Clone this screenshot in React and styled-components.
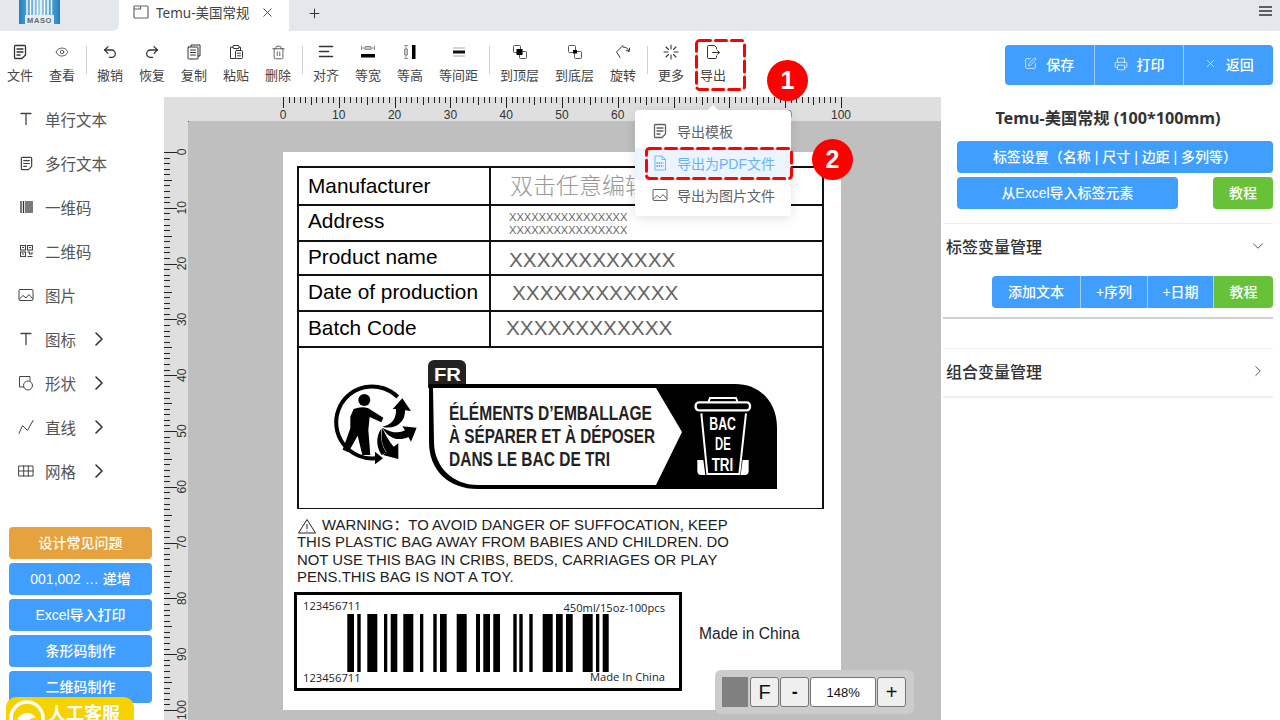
import React from "react";
import styled, { createGlobalStyle } from "styled-components";
import {
  ChevronDown,
  ChevronRight,
  Eye,
  Plus,
  Printer,
  Redo2,
  SquarePen,
  Trash2,
  Undo2,
  X,
} from "lucide-react";

const GlobalStyle = createGlobalStyle`
  html, body {
    margin: 0;
    padding: 0;
    background: #fff;
  }
  * {
    box-sizing: border-box;
  }
`;

const UI_FONT = `"Noto Sans", "Noto Sans CJK SC", sans-serif`;
const ARIAL_FONT = `"Liberation Sans", "Noto Sans CJK SC", sans-serif`;

const Page = styled.div`
  position: relative;
  width: 1280px;
  height: 720px;
  overflow: hidden;
  display: flex;
  flex-direction: column;
  font-family: ${UI_FONT};
  color: #444;
`;

/* tab strip */
const TabBar = styled.div`
  height: 31px;
  display: flex;
  flex-shrink: 0;
`;
const LogoCell = styled.div`
  width: 119px;
  background: #e4e7eb;
  border-bottom-right-radius: 7px;
  padding-left: 19px;
`;
const Tab = styled.div`
  width: 170px;
  display: flex;
  align-items: center;
  padding: 0 14px 7px;
  font-size: 13.5px;
  color: #444;
  svg:first-child {
    margin-right: 7px;
  }
`;
const TabTitle = styled.span`
  flex: 1;
`;
const TabRest = styled.div`
  flex: 1;
  background: #e4e7eb;
  display: flex;
  align-items: flex-start;
  justify-content: space-between;
  padding: 5px 7px 0 18px;
  color: #333;
`;
const PlusIcon = styled(Plus)`
  margin-top: 1px;
`;

/* toolbar */
const TopBar = styled.div`
  height: 66px;
  flex-shrink: 0;
  display: flex;
  align-items: flex-start;
  justify-content: space-between;
  padding-right: 7px;
`;
const Tools = styled.div`
  display: flex;
  align-items: flex-start;
  margin-left: -1px;
  padding-top: 12px;
`;
const Tool = styled.div`
  width: ${(p) => (p.$wide ? 55 : 42)}px;
  display: flex;
  flex-direction: column;
  align-items: center;
  font-size: 13px;
  line-height: 18px;
  color: #444;
`;
const ToolIcon = styled.div`
  height: 18px;
  margin-bottom: 5px;
  display: flex;
  align-items: center;
  justify-content: center;
  color: #333;
`;
const ToolDivider = styled.div`
  width: 1px;
  height: 28px;
  margin: 3px 2.5px 0;
  background: #d0d0d0;
`;
const ActionGroup = styled.div`
  margin-top: 14px;
  width: 268px;
  height: 40px;
  display: flex;
  border-radius: 4px;
  overflow: hidden;
  background: #409eff;
`;
const ActionButton = styled.div`
  flex: 1;
  display: flex;
  align-items: center;
  justify-content: center;
  gap: 9px;
  padding-bottom: 3px;
  color: #fff;
  font-size: 14px;
  font-weight: 500;
  & + & {
    border-left: 1px solid rgba(255, 255, 255, 0.5);
  }
`;

/* page body */
const Body = styled.div`
  flex: 1;
  min-height: 0;
  display: flex;
`;
const Sidebar = styled.div`
  width: 164px;
  flex-shrink: 0;
  display: flex;
  flex-direction: column;
  padding: 0 12px 17px 9px;
`;
const SideItem = styled.div`
  height: 44px;
  display: flex;
  align-items: center;
  padding-left: 9px;
  font-size: 15.5px;
  color: #555;
`;
const SideIcon = styled.div`
  width: 16px;
  margin-right: 11px;
  display: flex;
  justify-content: center;
  color: #444;
`;
const SideArrow = styled(ChevronRight)`
  margin-left: 11px;
  color: #333;
`;
const SideButtons = styled.div`
  margin-top: auto;
  display: flex;
  flex-direction: column;
  gap: 4px;
`;
const Button = styled.div`
  height: 32px;
  flex: ${(p) => (p.$grow ? 1 : "none")};
  width: ${(p) => (p.$width ? `${p.$width}px` : "auto")};
  display: flex;
  align-items: center;
  justify-content: center;
  padding-bottom: 2px;
  border-radius: 4px;
  background: ${(p) => p.$bg || "#409eff"};
  color: #fff;
  font-family: ${ARIAL_FONT};
  font-size: 14px;
  font-weight: 500;
`;
const ServiceBadge = styled.div`
  position: absolute;
  left: 6px;
  bottom: 0;
  width: 128px;
  height: 23px;
  overflow: hidden;
  background: #f5d200;
  border-radius: 10px 10px 0 0;
  display: flex;
  align-items: flex-start;
  padding-left: 2px;
  color: #fff;
  font-size: 18px;
  font-weight: 700;
  line-height: 32px;
  svg {
    margin-right: 2px;
    flex-shrink: 0;
  }
`;

/* workspace */
const Workspace = styled.div`
  position: relative;
  width: 777px;
  flex-shrink: 0;
  display: grid;
  grid-template-columns: 24px 1fr;
  grid-template-rows: 24px 1fr;
  background: #dfdfdf;
`;
const RulerCorner = styled.div`
  grid-column: 1;
  grid-row: 1;
`;
const RulerSvg = styled.svg`
  display: block;
  grid-column: ${(p) => p.$col};
  grid-row: ${(p) => p.$row};
  font-family: ${ARIAL_FONT};
  font-size: 12px;
  fill: #333;
`;
const Canvas = styled.div`
  position: relative;
  background: #bfbfbf;
  padding: 31px 0 0 95px;
  overflow: hidden;
`;
const CornerDot = styled.div`
  position: absolute;
  left: 0;
  top: 0;
  width: 1px;
  height: 1px;
  background: #e00;
`;
const Paper = styled.div`
  position: relative;
  width: 558px;
  height: 558px;
  background: #fff;
  color: #000;
  font-family: ${ARIAL_FONT};
`;
const LabelTable = styled.div`
  position: absolute;
  left: 14px;
  top: 14px;
  width: 527px;
  height: 343px;
  border: 2px solid #111;
  border-bottom-width: 1.5px;
  display: flex;
  flex-direction: column;
`;
const LabelRow = styled.div`
  height: ${(p) => p.$h}px;
  flex-shrink: 0;
  display: flex;
  border-bottom: 2px solid #111;
`;
const LabelName = styled.div`
  width: 192px;
  border-right: 2px solid #111;
  padding: 0 0 ${(p) => p.$lift || 0}px 9px;
  font-size: 20.8px;
  line-height: 1;
  display: flex;
  align-items: center;
`;
const LabelValue = styled.div`
  flex: 1;
  display: flex;
  flex-direction: column;
  justify-content: center;
  padding: ${(p) => p.$top || 0}px 0 ${(p) => p.$lift || 0}px ${(p) => p.$left}px;
  font-size: ${(p) => p.$size || 20.8}px;
  line-height: ${(p) => p.$line || 24}px;
  color: ${(p) => p.$color || "#666"};
  font-weight: ${(p) => p.$weight || 400};
  font-family: ${(p) => (p.$cjk ? `"Noto Sans CJK SC", sans-serif` : ARIAL_FONT)};
`;
const BadgeRow = styled.div`
  flex: 1;
  min-height: 0;
`;
const BadgeSvg = styled.svg`
  display: block;
  font-family: ${ARIAL_FONT};
  font-weight: 700;
`;
const Warning = styled.div`
  position: absolute;
  left: 14px;
  top: 365px;
  width: 450px;
  font-size: 14.9px;
  line-height: 17.4px;
  color: #222;
  white-space: nowrap;
`;
const WarningLine = styled.div`
  display: flex;
  align-items: center;
  gap: 5px;
`;
const BarcodeBox = styled.div`
  position: absolute;
  left: 11px;
  top: 440px;
  width: 388px;
  height: 99px;
  border: 3px solid #000;
  font-family: "Open Sans", ${ARIAL_FONT};
  font-size: 11.2px;
  line-height: 13px;
  color: #222;
`;
const BarcodeSvg = styled.svg`
  position: absolute;
  left: 50px;
  top: 19px;
`;
const BarcodeText = styled.span`
  position: absolute;
  ${(p) => (p.$right ? "right: 14px;" : "left: 6px;")}
  ${(p) => `top: ${p.$top}px;`}
`;
const MadeIn = styled.div`
  position: absolute;
  left: 416px;
  top: 473px;
  font-size: 15.6px;
  line-height: 18px;
  color: #222;
`;
const ZoomBar = styled.div`
  position: absolute;
  right: 27px;
  bottom: 6px;
  width: 199px;
  height: 44px;
  padding: 7px 8px 7px 7px;
  display: flex;
  gap: 1px;
  background: #ccc;
  border-radius: 6px;
`;
const ZoomSwatch = styled.div`
  width: 26px;
  background: #808080;
  margin-right: 1px;
`;
const ZoomButton = styled.div`
  width: ${(p) => p.$w}px;
  display: flex;
  align-items: center;
  justify-content: center;
  background: ${(p) => (p.$white ? "#fff" : "#efefef")};
  border: 1px solid #767676;
  border-radius: 3px;
  font-family: ${ARIAL_FONT};
  font-size: ${(p) => p.$size || 13}px;
  font-weight: ${(p) => (p.$bold ? 700 : 400)};
  color: #111;
`;

/* right panel */
const RightPanel = styled.div`
  flex: 1;
  padding: 0 7px 0 2px;
  display: flex;
  flex-direction: column;
`;
const PanelTitle = styled.div`
  height: 42px;
  margin-bottom: 2px;
  padding-bottom: 2px;
  display: flex;
  align-items: center;
  justify-content: center;
  font-size: 16.2px;
  font-weight: 700;
  color: #333;
`;
const PanelRow = styled.div`
  display: flex;
  justify-content: space-between;
  padding-left: 14px;
  margin-bottom: 4px;
`;
const SectionHead = styled.div`
  height: ${(p) => (p.$last ? 50 : 48)}px;
  margin-top: ${(p) => p.$top || 0}px;
  display: flex;
  align-items: center;
  justify-content: space-between;
  padding: 0 6px ${(p) => (p.$last ? 3 : 4)}px 3px;
  border-top: 1px solid #ebeef5;
  border-bottom: ${(p) => (p.$last ? "2px solid #ebeef5" : "none")};
  font-size: 16px;
  font-weight: 500;
  color: #303133;
`;
const ButtonGroup = styled.div`
  margin: 5px 0 0 auto;
  width: 281px;
  height: 32px;
  display: flex;
  border-radius: 4px;
  overflow: hidden;
`;
const GroupButton = styled.div`
  width: ${(p) => p.$w}px;
  display: flex;
  align-items: center;
  justify-content: center;
  padding-bottom: 2px;
  background: ${(p) => p.$bg || "#409eff"};
  color: #fff;
  font-family: ${ARIAL_FONT};
  font-size: 14px;
  font-weight: 500;
  & + & {
    border-left: 1px solid rgba(255, 255, 255, 0.5);
  }
`;
const GreyLine = styled.div`
  height: 2px;
  margin-top: 9px;
  background: #d0d0d0;
`;

/* overlays */
const Popover = styled.div`
  position: absolute;
  left: 635px;
  top: 110px;
  width: 156px;
  height: 106px;
  padding: 6px 0 4px;
  background: #fff;
  border-radius: 4px;
  box-shadow: 0 2px 12px rgba(0, 0, 0, 0.12);
  &::before {
    content: "";
    position: absolute;
    left: 73px;
    top: -5px;
    border-left: 5px solid transparent;
    border-right: 5px solid transparent;
    border-bottom: 5px solid #fff;
  }
`;
const PopItem = styled.div`
  height: 32px;
  display: flex;
  align-items: center;
  gap: 9px;
  padding: 0 0 2px 17px;
  font-family: ${ARIAL_FONT};
  font-size: 14px;
  color: ${(p) => (p.$active ? "#66b1ff" : "#606266")};
  background: ${(p) => (p.$active ? "#ecf5ff" : "transparent")};
`;
const DashFrame = styled.svg`
  position: absolute;
  left: ${(p) => p.$x}px;
  top: ${(p) => p.$y}px;
`;
const StepCircle = styled.div`
  position: absolute;
  left: ${(p) => p.$x}px;
  top: ${(p) => p.$y}px;
  width: 41px;
  height: 41px;
  border-radius: 50%;
  background: #f00;
  color: #fff;
  display: flex;
  align-items: center;
  justify-content: center;
  font-family: ${ARIAL_FONT};
  font-size: 25px;
  font-weight: 700;
`;

const DashBox = ({ x, y, w, h }) => (
  <DashFrame $x={x} $y={y} width={w} height={h}>
    <rect
      x="1.5"
      y="1.5"
      width={w - 3}
      height={h - 3}
      rx="3"
      fill="none"
      stroke="#f00"
      strokeWidth="3"
      strokeDasharray="11 5"
      strokeLinecap="round"
    />
  </DashFrame>
);

const Ic = ({ size = 16, children, sw = 1.2 }) => (
  <svg
    width={size}
    height={size}
    viewBox="0 0 16 16"
    fill="none"
    stroke="currentColor"
    strokeWidth={sw}
    strokeLinecap="round"
    strokeLinejoin="round"
  >
    {children}
  </svg>
);

const DocIcon = ({ size }) => (
  <Ic size={size} sw={1.3}>
    <path d="M10 14.5H3.5a1 1 0 0 1-1-1v-11a1 1 0 0 1 1-1h9a1 1 0 0 1 1 1V11l-3.5 3.5Z" />
    <path d="M5 5h6M5 8h6M5 11h3" />
  </Ic>
);
const CopyIcon = () => (
  <Ic sw={1}>
    <path d="M5 2.5V1h9v11h-2" />
    <rect x="2" y="3" width="10" height="12" rx="0.6" />
    <path d="M4.5 6h5M4.5 8.5h5M4.5 11h5" />
  </Ic>
);
const PasteIcon = () => (
  <Ic sw={1}>
    <path d="M11 3.2h1.5v3M5 3.2H2.5v11.3h5" />
    <rect x="5" y="1.5" width="6" height="3" rx="0.8" />
    <rect x="7.5" y="6.5" width="7" height="8" rx="1" />
    <path d="M9.5 9.2h3M9.5 11.8h3" />
  </Ic>
);
const AlignIcon = () => (
  <Ic sw={1.5}>
    <path d="M1.5 2.5h13M1.5 7.5h9M1.5 12.5h13" />
  </Ic>
);
const SameWidthIcon = () => (
  <svg width="16" height="16" viewBox="0 0 16 16">
    <path d="M1.5 2v4M14.5 2v4M1.5 4h13M5 2.5h6v3H5z" fill="none" stroke="#777" strokeWidth="0.8" />
    <rect x="1" y="10" width="14" height="3.5" fill="#000" />
  </svg>
);
const SameHeightIcon = () => (
  <svg width="16" height="16" viewBox="0 0 16 16">
    <path d="M2 1.5h4M2 14.5h4M4 1.5v13M2.5 5h3v6h-3z" fill="none" stroke="#777" strokeWidth="0.8" />
    <rect x="10" y="1" width="3.5" height="14" fill="#000" />
  </svg>
);
const SpacingIcon = () => (
  <svg width="14" height="16" viewBox="0 0 14 16">
    <path d="M1 4h12M1 12h12" stroke="#aaa" strokeWidth="1" />
    <rect x="1" y="6.5" width="12" height="3" fill="#111" />
  </svg>
);
const LayerIcon = ({ top }) => (
  <svg width="14" height="14" viewBox="0 0 14 14" fill="none" stroke="#444" strokeWidth="0.9">
    <rect x="0.5" y="0.5" width="7" height="7" rx="1" />
    <rect x="6.5" y="6.5" width="7" height="7" rx="1" />
    {top ? (
      <rect x="3.5" y="4" width="6" height="6" fill="#000" stroke="none" />
    ) : (
      <rect x="5" y="5" width="4" height="3.5" fill="#000" stroke="none" />
    )}
  </svg>
);
const RotateIcon = () => (
  <Ic sw={1}>
    <path d="M8 1.5 1.5 8l3.5 5.5" />
    <path d="M8 3c3 0 5.2 1.6 6 4" />
    <path d="M14.5 4.2 14.2 7.4 11.4 6.6" />
  </Ic>
);
const BurstIcon = () => (
  <Ic sw={1.1}>
    <path d="M8 1v4M8 11v4M1 8h4M11 8h4M3 3l2.5 2.5M13 3l-2.5 2.5M3 13l2.5-2.5M13 13l-2.5-2.5" />
  </Ic>
);
const ExportIcon = () => (
  <Ic sw={1}>
    <path d="M11.5 5V3.5L9.5 1.5h-6a1 1 0 0 0-1 1v11a1 1 0 0 0 1 1h7a1 1 0 0 0 1-1V12" />
    <path d="M7.5 8.5h7M12.5 6.5l2 2-2 2" />
  </Ic>
);
const TeeIcon = () => (
  <Ic sw={1.3}>
    <path d="M3 2.5h10M8 2.5v11" />
  </Ic>
);
const BarsIcon = () => (
  <svg width="13" height="12" viewBox="0 0 13 12">
    <path d="M1 0v12M3.5 0v12M6 0v12M8 0v12M10 0v12M12 0v12" stroke="#333" strokeWidth="1.3" />
  </svg>
);
const QrIcon = () => (
  <svg width="13" height="12" viewBox="0 0 13 12" fill="none" stroke="#444" strokeWidth="1.1">
    <rect x="0.5" y="0.5" width="5" height="4.5" />
    <rect x="7.5" y="0.5" width="5" height="4.5" />
    <rect x="0.5" y="7" width="5" height="4.5" />
    <path d="M2 2.5h2M9 2.5h2M2 9h2M7.5 7h2v2h3M7.5 11.5h5M12 7v2" />
  </svg>
);
const PictureIcon = ({ size }) => (
  <Ic size={size} sw={1}>
    <rect x="1" y="2.5" width="14" height="11" rx="1" />
    <path d="m1.5 12 3.5-3.5 3 2.5 3-3.5 3.5 4" />
  </Ic>
);
const ShapeIcon = () => (
  <Ic sw={1}>
    <path d="M6 12H1.5V1.5H12V6" />
    <circle cx="10" cy="10.5" r="4.5" />
  </Ic>
);
const LineIcon = () => (
  <Ic sw={1}>
    <path d="m1 14.5 3.5-8 5 5 5.5-10" />
  </Ic>
);
const GridIcon = () => (
  <Ic sw={1}>
    <rect x="1" y="3" width="14" height="10" />
    <path d="M1 8h14M5.7 3v10M10.3 3v10" />
  </Ic>
);
const PdfIcon = () => (
  <svg width="16" height="16" viewBox="0 0 16 16" fill="none" stroke="#66b1ff" strokeWidth="0.9">
    <path d="M3 1h7l3.5 3.5V15H3z" />
    <path d="M10 1v3.5h3.5" />
    <path d="M4.5 8h7M4.5 11h7" strokeDasharray="1.4 0.8" strokeWidth="2" />
  </svg>
);
const TabIcon = () => (
  <svg width="16" height="14" viewBox="0 0 16 14" fill="none" stroke="#666" strokeWidth="1.2">
    <rect x="1" y="1" width="14" height="12" rx="1" />
    <path d="M1 4h6.5V1" />
  </svg>
);
const MenuLines = () => (
  <svg width="15" height="12" viewBox="0 0 15 12">
    <path d="M1 2h13M1 6h13M1 10h13" stroke="#333" strokeWidth="1.4" />
  </svg>
);

const MasoLogo = () => (
  <svg width="41" height="24" viewBox="0 0 41 24">
    <defs>
      <linearGradient id="masoBlue" x1="0" y1="0" x2="1" y2="0">
        <stop offset="0" stopColor="#1d7fc4" />
        <stop offset="0.5" stopColor="#9ccbe8" />
        <stop offset="1" stopColor="#1d7fc4" />
      </linearGradient>
    </defs>
    <rect width="41" height="24" fill="url(#masoBlue)" />
    <path d="M8 0v15M11.5 0v15M15 0v15M18.5 0v15M22 0v15M25.5 0v15M29 0v15M32.5 0v15" stroke="#fff" strokeWidth="1.4" />
    <rect x="6" y="15" width="29" height="9" fill="#e8edf1" />
    <text x="20.5" y="23" textAnchor="middle" fontFamily="Liberation Sans" fontSize="7.5" fontWeight="700" letterSpacing="0.6" fill="#666">
      MASO
    </text>
  </svg>
);

const HeadsetIcon = () => (
  <svg width="38" height="38" viewBox="0 0 38 38" fill="none">
    <circle cx="19" cy="21" r="16" stroke="#fff" strokeWidth="3.5" />
    <path d="M9 22c4-6 10-7 15-5l4 3-6 2c-2 4-5 8-9 10l2-8Z" fill="#fff" />
  </svg>
);

const TOP_TICKS = Array.from({ length: 101 }, (_, i) => i);

const TopRuler = () => (
  <RulerSvg $col={2} $row={1} width="753" height="24" viewBox="0 0 753 24">
    {TOP_TICKS.map((i) => {
      const x = Math.round(95 + i * 5.58) + 0.5;
      const len = i % 10 === 0 ? 11 : i % 5 === 0 ? 8 : 6;
      return <line key={i} x1={x} x2={x} y1="0" y2={len} stroke="#222" strokeWidth="1" />;
    })}
    {TOP_TICKS.filter((i) => i % 10 === 0).map((i) => (
      <text key={i} x={95 + i * 5.58} y="22" textAnchor="middle">
        {i}
      </text>
    ))}
  </RulerSvg>
);

const LeftRuler = () => (
  <RulerSvg $col={1} $row={2} width="24" height="599" viewBox="0 0 24 599">
    {TOP_TICKS.map((i) => {
      const y = Math.round(31 + i * 5.58) + 0.5;
      const len = i % 10 === 0 ? 13 : i % 5 === 0 ? 8 : 6;
      return <line key={i} y1={y} y2={y} x1="0" x2={len} stroke="#222" strokeWidth="1" />;
    })}
    {TOP_TICKS.filter((i) => i % 10 === 0).map((i) => {
      const y = 31 + i * 5.58;
      return (
        <text key={i} x="22" y={y} textAnchor="middle" transform={`rotate(-90 22 ${y})`}>
          {i}
        </text>
      );
    })}
  </RulerSvg>
);

const BARS = [
  [347.3, 354], [357.3, 360.7], [367.3, 377.3], [384, 387.3], [390.7, 397.3], [403.3, 413.3],
  [420, 423.3], [433.3, 436.7], [440, 446.7], [456.7, 466.7], [476, 480], [483.3, 490],
  [493.3, 500], [513.3, 516.7], [519.3, 522.7], [529.3, 532.7], [542.7, 552.7], [556, 562.7],
  [566, 572.7], [582.7, 592.7], [596, 599.3], [602.7, 608.7],
];

const Barcode = () => (
  <BarcodeSvg width="264" height="58" viewBox="347 0 264 58">
    {BARS.map(([a, b]) => (
      <rect key={a} x={a} y="0" width={b - a} height="58" fill="#000" />
    ))}
  </BarcodeSvg>
);

// recycling badge, drawn in page coordinates so it is easy to compare with the label
const RecycleBadge = () => (
  <BadgeSvg width="523" height="160" viewBox="299 348 523 160">
    <g transform="translate(325 375) scale(0.3333)">
      <path d="M218 66A108 108 0 1 0 150 250" fill="none" stroke="#000" strokeWidth="12" />
      <path d="M150 230 174 250 150 268Z" fill="#000" />
      <circle cx="118" cy="75" r="18" fill="#000" />
      <path d="M86 102Q110 92 130 100L175 128 169 142 134 126 130 165 136 240 112 240 98 182 70 232 53 224 76 160 76 125Z" fill="#000" />
      <path d="M172 155C200 150 215 130 213 102L203 102 232 70 258 108 240 106C242 142 210 166 172 155Z" fill="#000" />
      <path d="M172 158C200 175 225 175 240 166L232 154 275 158 258 200 250 186C220 200 190 190 172 158Z" fill="#000" />
      <path d="M172 160C166 190 172 215 185 232L174 240 220 252 220 205 206 215C192 200 182 180 172 160Z" fill="#000" />
      <path d="M170 160C150 185 155 220 170 240L184 233C172 215 165 190 170 160Z" fill="#000" />
    </g>
    <path d="M428 366a6 6 0 0 1 6-6h26a6 6 0 0 1 6 6v22h-38Z" fill="#222" />
    <text x="434" y="381" fontSize="19" fill="#fff" textLength="27" lengthAdjust="spacingAndGlyphs">FR</text>
    <path d="M429 384H735C760 384 777 402 777 428V489H478C448 489 429 470 429 442Z" fill="#000" />
    <path d="M433 388H656L682 432 656 485H478C452 485 434 466 434 442Z" fill="#fff" />
    <text x="449" y="420" fontSize="20" fill="#222" textLength="203" lengthAdjust="spacingAndGlyphs">ÉLÉMENTS D’EMBALLAGE</text>
    <text x="449" y="443" fontSize="20" fill="#222" textLength="206" lengthAdjust="spacingAndGlyphs">À SÉPARER ET À DÉPOSER</text>
    <text x="449" y="466" fontSize="20" fill="#222" textLength="161" lengthAdjust="spacingAndGlyphs">DANS LE BAC DE TRI</text>
    <g transform="translate(660 380) scale(0.3333)">
      <rect x="107" y="67" width="163" height="24" rx="10" fill="none" stroke="#fff" strokeWidth="7" />
      <path d="M145 67 150 54H228L233 67" fill="none" stroke="#fff" strokeWidth="6" />
      <path d="M124 100 142 282H238L258 100" fill="none" stroke="#fff" strokeWidth="6" />
      <path d="M112 240h18l6 45h-12a12 12 0 0 1-12-12ZM266 240h-18l-6 45h12a12 12 0 0 0 12-12Z" fill="#fff" />
      <text x="148" y="150" fontSize="56" fill="#fff" textLength="80" lengthAdjust="spacingAndGlyphs">BAC</text>
      <text x="165" y="211" fontSize="56" fill="#fff" textLength="47" lengthAdjust="spacingAndGlyphs">DE</text>
      <text x="155" y="272" fontSize="56" fill="#fff" textLength="65" lengthAdjust="spacingAndGlyphs">TRI</text>
    </g>
  </BadgeSvg>
);

const TOOLS_A = [
  { label: "文件", icon: <DocIcon /> },
  { label: "查看", icon: <Eye size={14} strokeWidth={1.3} /> },
];
const TOOLS_B = [
  { label: "撤销", icon: <Undo2 size={16} strokeWidth={1.9} /> },
  { label: "恢复", icon: <Redo2 size={16} strokeWidth={1.9} /> },
  { label: "复制", icon: <CopyIcon /> },
  { label: "粘贴", icon: <PasteIcon /> },
  { label: "删除", icon: <Trash2 size={15} strokeWidth={1.2} /> },
];
const TOOLS_C = [
  { label: "对齐", icon: <AlignIcon /> },
  { label: "等宽", icon: <SameWidthIcon /> },
  { label: "等高", icon: <SameHeightIcon /> },
  { label: "等间距", icon: <SpacingIcon />, wide: true },
];
const TOOLS_D = [
  { label: "到顶层", icon: <LayerIcon top />, wide: true },
  { label: "到底层", icon: <LayerIcon />, wide: true },
  { label: "旋转", icon: <RotateIcon /> },
];
const TOOLS_E = [
  { label: "更多", icon: <BurstIcon /> },
  { label: "导出", icon: <ExportIcon /> },
];

const ToolSet = ({ items }) =>
  items.map((t) => (
    <Tool key={t.label} $wide={t.wide}>
      <ToolIcon>{t.icon}</ToolIcon>
      {t.label}
    </Tool>
  ));

const SIDE_ITEMS = [
  { label: "单行文本", icon: <TeeIcon /> },
  { label: "多行文本", icon: <DocIcon size={15} /> },
  { label: "一维码", icon: <BarsIcon /> },
  { label: "二维码", icon: <QrIcon /> },
  { label: "图片", icon: <PictureIcon /> },
  { label: "图标", icon: <TeeIcon />, more: true },
  { label: "形状", icon: <ShapeIcon />, more: true },
  { label: "直线", icon: <LineIcon />, more: true },
  { label: "网格", icon: <GridIcon />, more: true },
];

const SIDE_BUTTONS = [
  { label: "设计常见问题", bg: "#e6a23c" },
  { label: "001,002 … 递增" },
  { label: "Excel导入打印" },
  { label: "条形码制作" },
  { label: "二维码制作" },
];

const App = () => {
  return (
    <Page>
      <GlobalStyle />
      <TabBar>
        <LogoCell>
          <MasoLogo />
        </LogoCell>
        <Tab>
          <TabIcon />
          <TabTitle>Temu-美国常规</TabTitle>
          <X size={15} strokeWidth={1.5} />
        </Tab>
        <TabRest>
          <PlusIcon size={15} strokeWidth={1.6} />
          <MenuLines />
        </TabRest>
      </TabBar>

      <TopBar>
        <Tools>
          <ToolSet items={TOOLS_A} />
          <ToolDivider />
          <ToolSet items={TOOLS_B} />
          <ToolDivider />
          <ToolSet items={TOOLS_C} />
          <ToolDivider />
          <ToolSet items={TOOLS_D} />
          <ToolDivider />
          <ToolSet items={TOOLS_E} />
        </Tools>
        <ActionGroup>
          <ActionButton>
            <SquarePen size={13} strokeWidth={1.3} />
            保存
          </ActionButton>
          <ActionButton>
            <Printer size={14} strokeWidth={1.3} />
            打印
          </ActionButton>
          <ActionButton>
            <X size={13} strokeWidth={1.2} />
            返回
          </ActionButton>
        </ActionGroup>
      </TopBar>

      <Body>
        <Sidebar>
          {SIDE_ITEMS.map((item) => (
            <SideItem key={item.label}>
              <SideIcon>{item.icon}</SideIcon>
              {item.label}
              {item.more && <SideArrow size={24} strokeWidth={1.6} />}
            </SideItem>
          ))}
          <SideButtons>
            {SIDE_BUTTONS.map((b) => (
              <Button key={b.label} $bg={b.bg}>
                {b.label}
              </Button>
            ))}
          </SideButtons>
        </Sidebar>

        <Workspace>
          <RulerCorner />
          <TopRuler />
          <LeftRuler />
          <Canvas>
            <CornerDot />
            <Paper>
              <LabelTable>
                <LabelRow $h={38}>
                  <LabelName>Manufacturer</LabelName>
                  <LabelValue $left={19} $size={23} $line={30} $lift={4} $cjk $color="#999" $weight={300}>
                    双击任意编辑
                  </LabelValue>
                </LabelRow>
                <LabelRow $h={36}>
                  <LabelName $lift={3}>Address</LabelName>
                  <LabelValue $left={18} $size={11.1} $line={13} $top={1}>
                    <span>XXXXXXXXXXXXXXXX</span>
                    <span>XXXXXXXXXXXXXXXX</span>
                  </LabelValue>
                </LabelRow>
                <LabelRow $h={33.5}>
                  <LabelName>Product name</LabelName>
                  <LabelValue $left={18} $top={5}>XXXXXXXXXXXX</LabelValue>
                </LabelRow>
                <LabelRow $h={36}>
                  <LabelName>Date of production</LabelName>
                  <LabelValue $left={21} $top={1}>XXXXXXXXXXXX</LabelValue>
                </LabelRow>
                <LabelRow $h={36}>
                  <LabelName>Batch Code</LabelName>
                  <LabelValue $left={15} $lift={2}>XXXXXXXXXXXX</LabelValue>
                </LabelRow>
                <BadgeRow>
                  <RecycleBadge />
                </BadgeRow>
              </LabelTable>

              <Warning>
                <WarningLine>
                  <svg width="20" height="16" viewBox="0 0 20 16" fill="none" stroke="#222" strokeWidth="1">
                    <path d="M10 1.5 18.5 15h-17ZM10 6v5M10 12.5v1" />
                  </svg>
                  <span>WARNING：TO AVOID DANGER OF SUFFOCATION, KEEP</span>
                </WarningLine>
                <div>THIS PLASTIC BAG AWAY FROM BABIES AND CHILDREN. DO</div>
                <div>NOT USE THIS BAG IN CRIBS, BEDS, CARRIAGES OR PLAY</div>
                <div>PENS.THIS BAG IS NOT A TOY.</div>
              </Warning>

              <BarcodeBox>
                <BarcodeText $top={4}>123456711</BarcodeText>
                <BarcodeText $top={6} $right>450ml/15oz-100pcs</BarcodeText>
                <Barcode />
                <BarcodeText $top={76}>123456711</BarcodeText>
                <BarcodeText $top={75} $right>Made In China</BarcodeText>
              </BarcodeBox>
              <MadeIn>Made in China</MadeIn>
            </Paper>
            <ZoomBar>
              <ZoomSwatch />
              <ZoomButton $w={30} $size={20}>F</ZoomButton>
              <ZoomButton $w={29} $size={18} $bold>-</ZoomButton>
              <ZoomButton $w={67} $white>148%</ZoomButton>
              <ZoomButton $w={29} $size={20}>+</ZoomButton>
            </ZoomBar>
          </Canvas>
        </Workspace>

        <RightPanel>
          <PanelTitle>Temu-美国常规 (100*100mm)</PanelTitle>
          <PanelRow>
            <Button $grow>标签设置（名称 | 尺寸 | 边距 | 多列等）</Button>
          </PanelRow>
          <PanelRow>
            <Button $width={221}>从Excel导入标签元素</Button>
            <Button $width={60} $bg="#67c23a">教程</Button>
          </PanelRow>
          <SectionHead $top={10}>
            标签变量管理
            <ChevronDown size={18} strokeWidth={1.1} />
          </SectionHead>
          <ButtonGroup>
            <GroupButton $w={88}>添加文本</GroupButton>
            <GroupButton $w={67}>+序列</GroupButton>
            <GroupButton $w={66}>+日期</GroupButton>
            <GroupButton $w={60} $bg="#67c23a">教程</GroupButton>
          </ButtonGroup>
          <GreyLine />
          <SectionHead $top={29} $last>
            组合变量管理
            <ChevronRight size={18} strokeWidth={1.1} />
          </SectionHead>
        </RightPanel>
      </Body>

      <ServiceBadge>
        <HeadsetIcon />
        人工客服
      </ServiceBadge>

      <Popover>
        <PopItem>
          <DocIcon />
          导出模板
        </PopItem>
        <PopItem $active>
          <PdfIcon />
          导出为PDF文件
        </PopItem>
        <PopItem>
          <PictureIcon />
          导出为图片文件
        </PopItem>
      </Popover>

      <DashBox x={695} y={39} w={51} h={52} />
      <StepCircle $x={767} $y={60}>1</StepCircle>
      <DashBox x={645} y={147} w={148} h={33} />
      <StepCircle $x={812} $y={139}>2</StepCircle>
    </Page>
  );
};

export default App;
